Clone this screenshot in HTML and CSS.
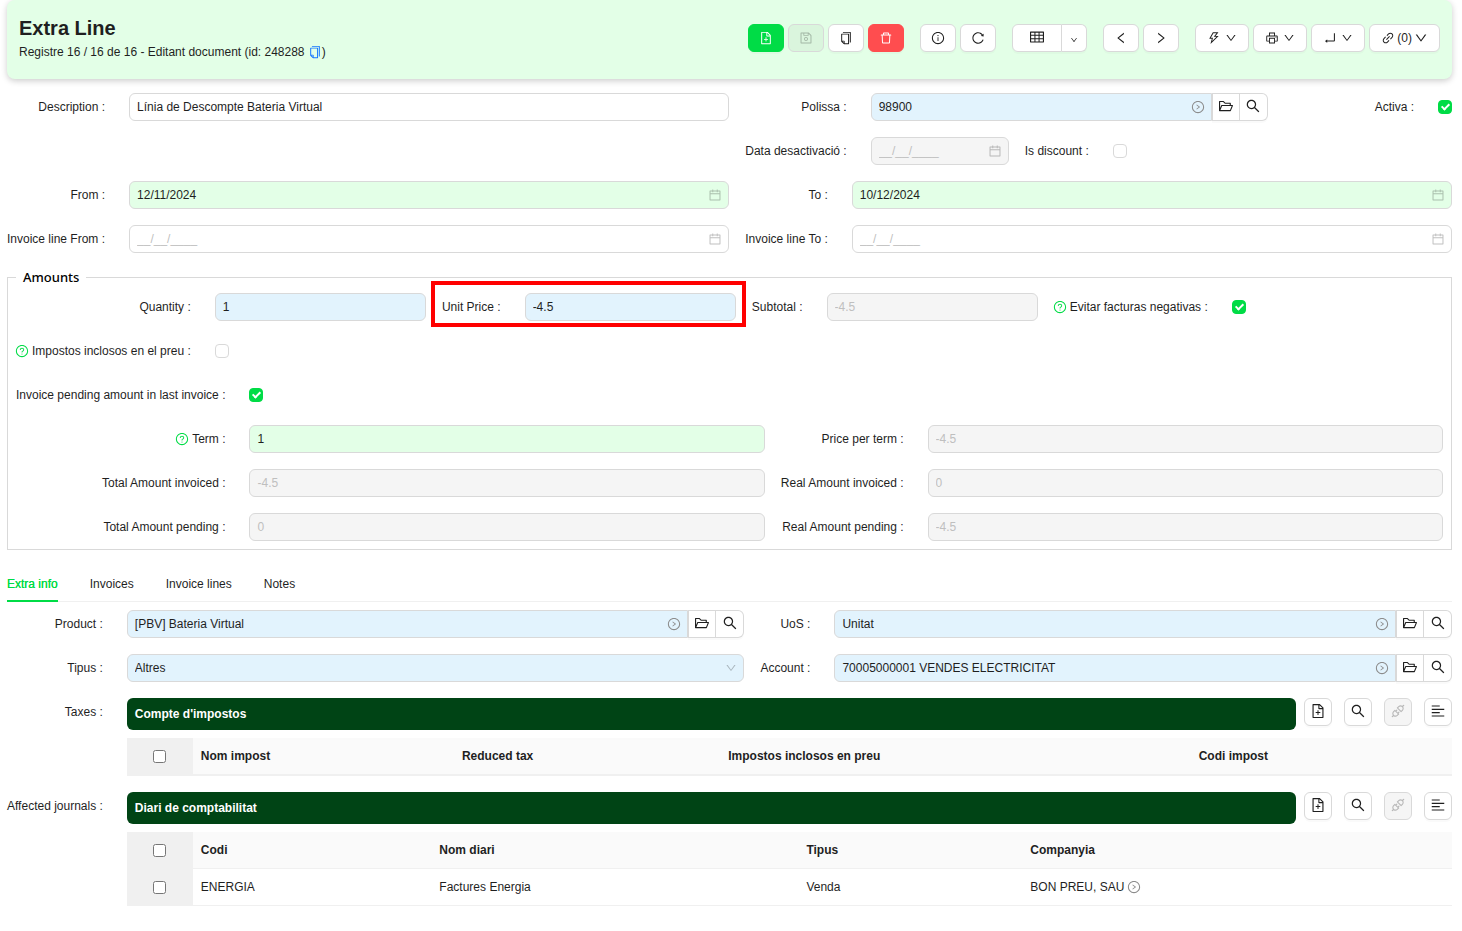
FILE: index.html
```html
<!DOCTYPE html>
<html lang="ca">
<head>
<meta charset="utf-8">
<meta name="viewport" content="width=device-width, initial-scale=1">
<title>Extra Line</title>
<link rel="stylesheet" href="styles.css">
</head>
<body>
<svg class="sprite" aria-hidden="true">
  <symbol id="file-add" viewBox="0 0 1024 1024"><path d="M854.6 288.6L639.4 73.4c-6-6-14.1-9.4-22.6-9.4H192c-17.7 0-32 14.3-32 32v832c0 17.7 14.3 32 32 32h640c17.7 0 32-14.3 32-32V311.3c0-8.5-3.4-16.7-9.4-22.7zM790.2 326H602V137.8L790.2 326zm1.8 562H232V136h302v216a42 42 0 0042 42h216v494zM544 472c0-4.4-3.6-8-8-8h-48c-4.4 0-8 3.6-8 8v108H372c-4.4 0-8 3.6-8 8v48c0 4.4 3.6 8 8 8h108v108c0 4.4 3.6 8 8 8h48c4.4 0 8-3.6 8-8V644h108c4.4 0 8-3.6 8-8v-48c0-4.4-3.6-8-8-8H544V472z"/></symbol>
  <symbol id="save" viewBox="0 0 1024 1024"><path d="M893.3 293.3L730.7 130.7c-7.5-7.5-16.7-13-26.7-16V112H144c-17.7 0-32 14.3-32 32v736c0 17.7 14.3 32 32 32h736c17.7 0 32-14.3 32-32V338.5c0-17-6.7-33.2-18.7-45.2zM384 184h256v104H384V184zm456 656H184V184h136v136c0 17.7 14.3 32 32 32h320c17.7 0 32-14.3 32-32V205.8l136 136V840zM512 442c-79.5 0-144 64.5-144 144s64.5 144 144 144 144-64.5 144-144-64.5-144-144-144zm0 224c-44.2 0-80-35.8-80-80s35.8-80 80-80 80 35.8 80 80-35.8 80-80 80z"/></symbol>
  <symbol id="copy" viewBox="0 0 1024 1024"><path d="M832 64H296c-4.4 0-8 3.6-8 8v56c0 4.4 3.6 8 8 8h496v688c0 4.4 3.6 8 8 8h56c4.4 0 8-3.6 8-8V96c0-17.7-14.3-32-32-32zM704 192H192c-17.7 0-32 14.3-32 32v530.7c0 8.5 3.4 16.6 9.4 22.6l173.3 173.3c2.2 2.2 4.7 4 7.4 5.5v1.9h4.2c3.5 1.3 7.2 2 11 2H704c17.7 0 32-14.3 32-32V224c0-17.7-14.3-32-32-32zM350 856.2L263.9 770H350v86.2zM664 888H414V746c0-22.1-17.9-40-40-40H232V264h432v624z"/></symbol>
  <symbol id="delete" viewBox="0 0 1024 1024"><path d="M360 184h-8c4.4 0 8-3.6 8-8v8h304v-8c0 4.4 3.6 8 8 8h-8v72h72v-80c0-35.3-28.7-64-64-64H352c-35.3 0-64 28.7-64 64v80h72v-72zm504 72H160c-17.7 0-32 14.3-32 32v32c0 4.4 3.6 8 8 8h60.4l24.7 523c1.6 34.1 29.8 61 63.9 61h454c34.2 0 62.3-26.8 63.9-61l24.7-523H888c4.4 0 8-3.6 8-8v-32c0-17.7-14.3-32-32-32zM731.3 840H292.7l-24.2-512h487l-24.2 512z"/></symbol>
  <symbol id="info" viewBox="0 0 1024 1024"><path d="M512 64C264.6 64 64 264.6 64 512s200.6 448 448 448 448-200.6 448-448S759.4 64 512 64zm0 820c-205.4 0-372-166.6-372-372s166.6-372 372-372 372 166.6 372 372-166.6 372-372 372z"/><path d="M464 336a48 48 0 1096 0 48 48 0 10-96 0zm72 112h-48c-4.4 0-8 3.6-8 8v272c0 4.4 3.6 8 8 8h48c4.4 0 8-3.6 8-8V456c0-4.4-3.6-8-8-8z"/></symbol>
  <symbol id="reload" viewBox="0 0 1024 1024"><path d="M909.1 209.3l-56.4 44.1C775.8 155.1 656.2 92 521.9 92 290 92 102.3 279.5 102 511.5 101.7 743.7 289.8 932 521.9 932c181.3 0 335.8-115 394.6-276.1 1.5-4.2-.7-8.9-4.9-10.3l-56.7-19.5a8 8 0 00-10.1 4.8c-1.8 5-3.8 10-5.9 14.9-17.3 41-42.1 77.8-73.7 109.4A344.77 344.77 0 01655.9 829c-42.3 17.9-87.4 27-133.8 27-46.5 0-91.5-9.1-133.8-27A341.5 341.5 0 01279 755.2a342.16 342.16 0 01-73.7-109.4c-17.9-42.4-27-87.4-27-133.9s9.1-91.5 27-133.9c17.3-41 42.1-77.8 73.7-109.4 31.6-31.6 68.4-56.4 109.3-73.8 42.3-17.9 87.4-27 133.8-27 46.5 0 91.5 9.1 133.8 27a341.5 341.5 0 01109.3 73.8c9.9 9.9 19.2 20.4 27.8 31.4l-60.2 47a8 8 0 003 14.1l175.6 43c5 1.2 9.9-2.6 9.9-7.7l.8-180.9c-.1-6.6-7.8-10.3-13-6.2z"/></symbol>
  <symbol id="table" viewBox="0 0 1024 1024"><path d="M928 160H96c-17.7 0-32 14.3-32 32v640c0 17.7 14.3 32 32 32h832c17.7 0 32-14.3 32-32V192c0-17.7-14.3-32-32-32zm-40 208H676V232h212v136zm0 224H676V432h212v160zM412 432h200v160H412V432zm200-64H412V232h200v136zm-476 64h212v160H136V432zm0-200h212v136H136V232zm0 424h212v136H136V656zm276 0h200v136H412V656zm476 136H676V656h212v136z"/></symbol>
  <symbol id="down" viewBox="0 0 1024 1024"><path d="M884 256h-75c-5.1 0-9.9 2.5-12.9 6.6L512 654.2 227.9 262.6c-3-4.1-7.8-6.6-12.9-6.6h-75c-6.5 0-10.3 7.4-6.5 12.7l352.6 486.1c12.8 17.6 39 17.6 51.7 0l352.6-486.1c3.9-5.3.1-12.7-6.4-12.7z"/></symbol>
  <symbol id="left" viewBox="0 0 1024 1024"><path d="M724 218.3V141c0-6.7-7.7-10.4-12.9-6.3L260.3 486.8a31.86 31.86 0 000 50.3l450.8 352.1c5.3 4.1 12.9.4 12.9-6.3v-77.3c0-4.9-2.3-9.6-6.1-12.6l-360-281 360-281.1c3.8-3 6.1-7.7 6.1-12.6z"/></symbol>
  <symbol id="right" viewBox="0 0 1024 1024"><path d="M765.7 486.8L314.9 134.7A7.97 7.97 0 00302 141v77.3c0 4.9 2.3 9.6 6.1 12.6l360 281.1-360 281.1c-3.9 3-6.1 7.7-6.1 12.6V883c0 6.7 7.7 10.4 12.9 6.3l450.8-352.1a31.96 31.96 0 000-50.4z"/></symbol>
  <symbol id="bolt" viewBox="0 0 1024 1024"><path d="M848 359.3H627.7L825.8 109c4.1-5.3.4-13-6.3-13H436c-2.8 0-5.5 1.5-6.9 4L170 547.5c-3.1 5.3.7 12 6.9 12h174.4l-89.4 357.6c-1.9 7.8 7.5 13.3 13.3 7.7L853.5 373c5.2-4.9 1.7-13.7-5.5-13.7zM378.2 732.5l60.3-241H281.1l189.6-327.4h224.6L487 427.4h211L378.2 732.5z"/></symbol>
  <symbol id="printer" viewBox="0 0 1024 1024"><path d="M820 436h-40c-4.4 0-8 3.6-8 8v40c0 4.4 3.6 8 8 8h40c4.4 0 8-3.6 8-8v-40c0-4.4-3.6-8-8-8zm32-104H732V120c0-4.4-3.6-8-8-8H300c-4.4 0-8 3.6-8 8v212H172c-44.2 0-80 35.8-80 80v328c0 17.7 14.3 32 32 32h168v132c0 4.4 3.6 8 8 8h424c4.4 0 8-3.6 8-8V772h168c17.7 0 32-14.3 32-32V412c0-44.2-35.8-80-80-80zM360 180h304v152H360V180zm304 664H360V568h304v276zm200-140H732V500H292v204H160V412c0-6.6 5.4-12 12-12h680c6.6 0 12 5.4 12 12v292z"/></symbol>
  <symbol id="enter" viewBox="0 0 1024 1024"><path d="M864 170h-60c-4.4 0-8 3.6-8 8v518H310v-73c0-6.7-7.8-10.5-13-6.3l-141.9 112a8 8 0 000 12.6l141.9 112c5.3 4.2 13 .4 13-6.3v-75h498c35.3 0 64-28.7 64-64V178c0-4.4-3.6-8-8-8z"/></symbol>
  <symbol id="link" viewBox="0 0 1024 1024"><path d="M574 665.4a8.03 8.03 0 00-11.3 0L446.5 781.6c-53.8 53.8-144.6 59.5-204 0-59.5-59.5-53.8-150.2 0-204l116.2-116.2c3.1-3.1 3.1-8.2 0-11.3l-39.8-39.8a8.03 8.03 0 00-11.3 0L191.4 526.5c-84.6 84.6-84.6 221.5 0 306s221.5 84.6 306 0l116.2-116.2c3.1-3.1 3.1-8.2 0-11.3L574 665.4zm258.6-474c-84.6-84.6-221.5-84.6-306 0L410.3 307.6a8.03 8.03 0 000 11.3l39.7 39.7c3.1 3.1 8.2 3.1 11.3 0l116.2-116.2c53.8-53.8 144.6-59.5 204 0 59.5 59.5 53.8 150.2 0 204L665.3 562.6a8.03 8.03 0 000 11.3l39.8 39.8c3.1 3.1 8.2 3.1 11.3 0l116.2-116.2c84.5-84.6 84.5-221.5 0-306.1zM610.1 372.3a8.03 8.03 0 00-11.3 0L372.3 598.7a8.03 8.03 0 000 11.3l39.6 39.6c3.1 3.1 8.2 3.1 11.3 0l226.4-226.4c3.1-3.1 3.1-8.2 0-11.3l-39.5-39.6z"/></symbol>
  <symbol id="folder" viewBox="0 0 1024 1024"><path d="M928 444H820V330.4c0-17.7-14.3-32-32-32H473L355.7 186.2a8.15 8.15 0 00-5.5-2.2H96c-17.7 0-32 14.3-32 32v592c0 17.7 14.3 32 32 32h698c13 0 24.8-7.9 29.7-20l134-332c1.5-3.8 2.3-7.9 2.3-12 0-17.7-14.3-32-32-32zM136 256h188.5l119.6 114.4H748V444H238c-13 0-24.8 7.9-29.7 20L136 643.2V256zm635.3 512H159l103.3-256h612.4L771.3 768z"/></symbol>
  <symbol id="search" viewBox="0 0 1024 1024"><path d="M909.6 854.5L649.9 594.8C690.2 542.7 712 479 712 412c0-80.2-31.3-155.4-87.9-212.1-56.6-56.7-132-87.9-212.1-87.9s-155.5 31.3-212.1 87.9C143.2 256.5 112 331.8 112 412c0 80.1 31.3 155.5 87.9 212.1C256.5 680.8 331.8 712 412 712c67 0 130.6-21.8 182.7-62l259.7 259.6a8.2 8.2 0 0011.6 0l43.6-43.5a8.2 8.2 0 000-11.6zM570.4 570.4C528 612.7 471.8 636 412 636s-116-23.3-158.4-65.6C211.3 528 188 471.8 188 412s23.3-116.1 65.6-158.4C296 211.3 352.2 188 412 188s116.1 23.2 158.4 65.6S636 352.2 636 412s-23.3 116.1-65.6 158.4z"/></symbol>
  <symbol id="calendar" viewBox="0 0 1024 1024"><path d="M880 184H712v-64c0-4.4-3.6-8-8-8h-56c-4.4 0-8 3.6-8 8v64H384v-64c0-4.4-3.6-8-8-8h-56c-4.4 0-8 3.6-8 8v64H144c-17.7 0-32 14.3-32 32v664c0 17.7 14.3 32 32 32h736c17.7 0 32-14.3 32-32V216c0-17.7-14.3-32-32-32zm-40 656H184V460h656v380zM184 392V256h128v48c0 4.4 3.6 8 8 8h56c4.4 0 8-3.6 8-8v-48h256v48c0 4.4 3.6 8 8 8h56c4.4 0 8-3.6 8-8v-48h128v136H184z"/></symbol>
  <symbol id="go" viewBox="0 0 1024 1024"><path d="M666.7 505.5l-246-178A8 8 0 00408 334v46.9c0 10.2 4.9 19.9 13.2 25.9L566.6 512 421.2 617.2c-8.3 6-13.2 15.6-13.2 25.9V690c0 6.5 7.4 10.3 12.7 6.5l246-178c4.4-3.2 4.4-9.8 0-13z"/><path d="M512 64C264.6 64 64 264.6 64 512s200.6 448 448 448 448-200.6 448-448S759.4 64 512 64zm0 820c-205.4 0-372-166.6-372-372s166.6-372 372-372 372 166.6 372 372-166.6 372-372 372z"/></symbol>
  <symbol id="help" viewBox="0 0 1024 1024"><path d="M512 64C264.6 64 64 264.6 64 512s200.6 448 448 448 448-200.6 448-448S759.4 64 512 64zm0 820c-205.4 0-372-166.6-372-372s166.6-372 372-372 372 166.6 372 372-166.6 372-372 372z"/><path d="M623.6 316.7C593.6 290.4 554 276 512 276s-81.6 14.5-111.6 40.7C369.2 344 352 380.7 352 420v7.6c0 4.4 3.6 8 8 8h48c4.4 0 8-3.6 8-8V420c0-44.1 43.1-80 96-80s96 35.9 96 80c0 31.1-22 59.6-56.1 72.7-21.2 8.1-39.2 22.3-52.1 40.9-13.1 19-19.9 41.8-19.9 64.9V620c0 4.4 3.6 8 8 8h48c4.4 0 8-3.6 8-8v-22.7a48.3 48.3 0 0130.9-44.8c59-22.7 97.1-74.7 97.1-132.5.1-39.3-17.1-76-48.3-103.3zM472 732a40 40 0 1080 0 40 40 0 10-80 0z"/></symbol>
  <symbol id="lines" viewBox="0 0 1024 1024"><path d="M112 158h512v72H112zM112 370h800v72H112zM112 582h512v72H112zM112 794h800v72H112z"/></symbol>
  <symbol id="plug" viewBox="0 0 1024 1024"><path d="M917.7 148.8l-42.4-42.4c-1.6-1.6-3.6-2.3-5.7-2.3s-4.1.8-5.7 2.3l-76.1 76.1a199.27 199.27 0 00-112.1-34.3c-51.2 0-102.4 19.5-141.5 58.6L432.3 308.7a8.03 8.03 0 000 11.3L704 591.7c1.6 1.6 3.6 2.3 5.7 2.3 2 0 4.1-.8 5.7-2.3l101.9-101.9c68.9-69 77-175.7 24.3-253.5l76.1-76.1c3.1-3.2 3.1-8.3 0-11.4zM769.1 441.7l-59.4 59.4-186.8-186.8 59.4-59.4c24.9-24.9 58.1-38.7 93.4-38.7 35.3 0 68.4 13.7 93.4 38.7 24.9 24.9 38.7 58.1 38.7 93.4 0 35.3-13.8 68.4-38.7 93.4zm-190.2 105a8.03 8.03 0 00-11.3 0L501 613.3 410.7 523l66.7-66.7c3.1-3.1 3.1-8.2 0-11.3L441 408.6a8.03 8.03 0 00-11.3 0L363 475.3l-43-43a7.85 7.85 0 00-5.7-2.3c-2 0-4.1.8-5.7 2.3L206.8 534.2c-68.9 69-77 175.7-24.3 253.5l-76.1 76.1a8.03 8.03 0 000 11.3l42.4 42.4c1.6 1.6 3.6 2.3 5.7 2.3s4.1-.8 5.7-2.3l76.1-76.1c33.7 22.9 72.9 34.3 112.1 34.3 51.2 0 102.4-19.5 141.5-58.6l101.9-101.9c3.1-3.1 3.1-8.2 0-11.3l-43-43 66.7-66.7c3.1-3.1 3.1-8.2 0-11.3l-36.6-36.2zM441.7 769.1a131.32 131.32 0 01-93.4 38.7c-35.3 0-68.4-13.7-93.4-38.7a131.32 131.32 0 01-38.7-93.4c0-35.3 13.7-68.4 38.7-93.4l59.4-59.4 186.8 186.8-59.4 59.4z"/></symbol>
</svg>

<header class="header">
  <div class="heading">
    <h1 class="title">Extra Line</h1>
    <p class="subtitle">Registre 16 / 16 de 16 - Editant document (id: 248288 <a class="copy-link" href="#" aria-label="Copia l'id"><svg class="icon"><use href="#copy"/></svg></a>)</p>
  </div>
  <div class="toolbar">
    <div class="group">
      <button class="btn new" aria-label="Nou"><svg class="icon"><use href="#file-add"/></svg></button>
      <button class="btn" disabled aria-label="Desa"><svg class="icon"><use href="#save"/></svg></button>
      <button class="btn" aria-label="Duplica"><svg class="icon"><use href="#copy"/></svg></button>
      <button class="btn danger" aria-label="Elimina"><svg class="icon"><use href="#delete"/></svg></button>
    </div>
    <div class="group">
      <button class="btn" aria-label="Informació"><svg class="icon"><use href="#info"/></svg></button>
      <button class="btn" aria-label="Recarrega"><svg class="icon"><use href="#reload"/></svg></button>
    </div>
    <div class="group split">
      <button class="btn view" aria-label="Vista de taula"><svg class="icon large"><use href="#table"/></svg></button>
      <button class="btn view-more" aria-label="Més vistes"><svg class="icon small"><use href="#down"/></svg></button>
    </div>
    <div class="group">
      <button class="btn" aria-label="Anterior"><svg class="icon"><use href="#left"/></svg></button>
      <button class="btn" aria-label="Següent"><svg class="icon"><use href="#right"/></svg></button>
    </div>
    <div class="group">
      <button class="btn menu" aria-label="Accions"><svg class="icon"><use href="#bolt"/></svg><svg class="icon caret"><use href="#down"/></svg></button>
      <button class="btn menu" aria-label="Imprimeix"><svg class="icon"><use href="#printer"/></svg><svg class="icon caret"><use href="#down"/></svg></button>
      <button class="btn menu" aria-label="Relacions"><svg class="icon"><use href="#enter"/></svg><svg class="icon caret"><use href="#down"/></svg></button>
      <button class="btn menu tight" aria-label="Adjunts (0)"><svg class="icon"><use href="#link"/></svg><span>(0)</span><svg class="icon"><use href="#down"/></svg></button>
    </div>
  </div>
</header>

<main>
  <div class="form">
    <label class="label tall" for="description">Description :</label>
    <div class="field tall"><input id="description" type="text" value="Línia de Descompte Bateria Virtual"></div>
    <div class="form policy">
      <label class="label" for="polissa">Polissa :</label>
      <div class="combo wide">
        <div class="field required"><input id="polissa" type="text" value="98900"><svg class="icon go"><use href="#go"/></svg></div>
        <button class="btn square" aria-label="Obre"><svg class="icon large"><use href="#folder"/></svg></button>
        <button class="btn square" aria-label="Cerca"><svg class="icon large"><use href="#search"/></svg></button>
      </div>
      <label class="label" for="activa">Activa :</label>
      <input class="check" id="activa" type="checkbox" checked>
      <label class="label" for="deactivation">Data desactivació :</label>
      <div class="field disabled"><input id="deactivation" type="text" placeholder="__/__/____" disabled><svg class="icon calendar"><use href="#calendar"/></svg></div>
      <label class="label" for="is-discount">Is discount :</label>
      <input class="check" id="is-discount" type="checkbox">
    </div>
    <label class="label" for="from">From :</label>
    <div class="field key"><input id="from" type="text" value="12/11/2024"><svg class="icon calendar"><use href="#calendar"/></svg></div>
    <label class="label" for="to">To :</label>
    <div class="field key"><input id="to" type="text" value="10/12/2024"><svg class="icon calendar"><use href="#calendar"/></svg></div>
    <label class="label" for="line-from">Invoice line From :</label>
    <div class="field"><input id="line-from" type="text" placeholder="__/__/____"><svg class="icon calendar"><use href="#calendar"/></svg></div>
    <label class="label" for="line-to">Invoice line To :</label>
    <div class="field"><input id="line-to" type="text" placeholder="__/__/____"><svg class="icon calendar"><use href="#calendar"/></svg></div>
  </div>

  <fieldset class="amounts">
    <legend>Amounts</legend>
    <div class="form four">
      <label class="label" for="quantity">Quantity :</label>
      <div class="field required"><input id="quantity" type="text" value="1"></div>
      <div class="pair highlight">
        <label class="label" for="unit-price">Unit Price :</label>
        <div class="field required"><input id="unit-price" type="text" value="-4.5"></div>
      </div>
      <label class="label" for="subtotal">Subtotal :</label>
      <div class="field disabled"><input id="subtotal" type="text" value="-4.5" disabled></div>
      <label class="label" for="avoid-negative"><svg class="icon"><use href="#help"/></svg>Evitar facturas negativas :</label>
      <input class="check" id="avoid-negative" type="checkbox" checked>
      <label class="label" for="taxes-included"><svg class="icon"><use href="#help"/></svg>Impostos inclosos en el preu :</label>
      <input class="check" id="taxes-included" type="checkbox">
    </div>
    <div class="form terms">
      <label class="label" for="pending-last">Invoice pending amount in last invoice :</label>
      <input class="check row-end" id="pending-last" type="checkbox" checked>
      <label class="label" for="term"><svg class="icon"><use href="#help"/></svg>Term :</label>
      <div class="field key"><input id="term" type="text" value="1"></div>
      <label class="label" for="price-term">Price per term :</label>
      <div class="field disabled"><input id="price-term" type="text" value="-4.5" disabled></div>
      <label class="label" for="total-invoiced">Total Amount invoiced :</label>
      <div class="field disabled"><input id="total-invoiced" type="text" value="-4.5" disabled></div>
      <label class="label" for="real-invoiced">Real Amount invoiced :</label>
      <div class="field disabled"><input id="real-invoiced" type="text" value="0" disabled></div>
      <label class="label" for="total-pending">Total Amount pending :</label>
      <div class="field disabled"><input id="total-pending" type="text" value="0" disabled></div>
      <label class="label" for="real-pending">Real Amount pending :</label>
      <div class="field disabled"><input id="real-pending" type="text" value="-4.5" disabled></div>
    </div>
  </fieldset>

  <div class="tabs" role="tablist">
    <button class="tab active" role="tab" aria-selected="true">Extra info</button>
    <button class="tab" role="tab" aria-selected="false">Invoices</button>
    <button class="tab" role="tab" aria-selected="false">Invoice lines</button>
    <button class="tab" role="tab" aria-selected="false">Notes</button>
  </div>

  <div class="form">
    <label class="label" for="product">Product :</label>
    <div class="combo">
      <div class="field required"><input id="product" type="text" value="[PBV] Bateria Virtual"><svg class="icon go"><use href="#go"/></svg></div>
      <button class="btn square" aria-label="Obre"><svg class="icon large"><use href="#folder"/></svg></button>
      <button class="btn square" aria-label="Cerca"><svg class="icon large"><use href="#search"/></svg></button>
    </div>
    <label class="label" for="uos">UoS :</label>
    <div class="combo">
      <div class="field required"><input id="uos" type="text" value="Unitat"><svg class="icon go"><use href="#go"/></svg></div>
      <button class="btn square" aria-label="Obre"><svg class="icon large"><use href="#folder"/></svg></button>
      <button class="btn square" aria-label="Cerca"><svg class="icon large"><use href="#search"/></svg></button>
    </div>
    <label class="label" for="tipus">Tipus :</label>
    <div class="field required select"><select id="tipus"><option>Altres</option></select><svg class="icon arrow"><use href="#down"/></svg></div>
    <label class="label" for="account">Account :</label>
    <div class="combo">
      <div class="field required"><input id="account" type="text" value="70005000001 VENDES ELECTRICITAT"><svg class="icon go"><use href="#go"/></svg></div>
      <button class="btn square" aria-label="Obre"><svg class="icon large"><use href="#folder"/></svg></button>
      <button class="btn square" aria-label="Cerca"><svg class="icon large"><use href="#search"/></svg></button>
    </div>

    <span class="label list-label">Taxes :</span>
    <section class="list">
      <div class="list-head">
        <h2 class="list-title">Compte d'impostos</h2>
        <div class="list-actions">
          <button class="btn square" aria-label="Afegeix"><svg class="icon large"><use href="#file-add"/></svg></button>
          <button class="btn square" aria-label="Cerca"><svg class="icon large"><use href="#search"/></svg></button>
          <button class="btn square" disabled aria-label="Desvincula"><svg class="icon large"><use href="#plug"/></svg></button>
          <button class="btn square" aria-label="Canvia la vista"><svg class="icon large"><use href="#lines"/></svg></button>
        </div>
      </div>
      <table class="grid taxes">
        <thead><tr><th class="pick"><input type="checkbox" aria-label="Selecciona-ho tot"></th><th class="c1">Nom impost</th><th class="c2">Reduced tax</th><th class="c3">Impostos inclosos en preu</th><th>Codi impost</th></tr></thead>
      </table>
    </section>

    <span class="label list-label">Affected journals :</span>
    <section class="list">
      <div class="list-head">
        <h2 class="list-title">Diari de comptabilitat</h2>
        <div class="list-actions">
          <button class="btn square" aria-label="Afegeix"><svg class="icon large"><use href="#file-add"/></svg></button>
          <button class="btn square" aria-label="Cerca"><svg class="icon large"><use href="#search"/></svg></button>
          <button class="btn square" disabled aria-label="Desvincula"><svg class="icon large"><use href="#plug"/></svg></button>
          <button class="btn square" aria-label="Canvia la vista"><svg class="icon large"><use href="#lines"/></svg></button>
        </div>
      </div>
      <table class="grid journals">
        <thead><tr><th class="pick"><input type="checkbox" aria-label="Selecciona-ho tot"></th><th class="c1">Codi</th><th class="c2">Nom diari</th><th class="c3">Tipus</th><th>Companyia</th></tr></thead>
        <tbody><tr><td class="pick"><input type="checkbox" aria-label="Selecciona ENERGIA"></td><td>ENERGIA</td><td>Factures Energia</td><td>Venda</td><td><span class="with-icon">BON PREU, SAU<svg class="icon go"><use href="#go"/></svg></span></td></tr></tbody>
      </table>
    </section>
  </div>
</main>
</body>
</html>
```
FILE: styles.css
```css
:root {
  --text: #1f1f1f;
  --line: #d9d9d9;
  --green: #00dc46;
  --mint: #e3ffe7;
  --sky: #e2f3fd;
  --muted: #f5f5f5;
  --faint: #bfbfbf;
}

*, ::before, ::after { box-sizing: border-box; }

body {
  margin: 0;
  padding: 0 10px 16px 7px;
  background: #fff;
  color: var(--text);
  font: 12px/20px "Liberation Sans", Arial, sans-serif;
}

input, select, button { font: inherit; color: inherit; }

.sprite { display: none; }

.icon {
  flex: none;
  width: 14px;
  height: 14px;
  fill: currentColor;
}
.icon.large { width: 16px; height: 16px; margin-bottom: 2px; }
.icon.caret { width: 12px; height: 12px; }
.icon.small { width: 8px; height: 8px; }
.icon.go { color: #8c8c8c; }

/* Header */
.header {
  display: flex;
  justify-content: space-between;
  align-items: center;
  margin-bottom: 14px;
  padding: 14px 12px 17px;
  background: var(--mint);
  border-radius: 8px;
  box-shadow: 0 2px 6px rgba(0, 0, 0, 0.2);
}
.title { margin: 0; font-size: 20px; line-height: 28px; }
.subtitle { margin: 0; }
.copy-link { color: #1677ff; }
.copy-link .icon { vertical-align: -3px; }

.toolbar { display: flex; gap: 16px; }
.group { display: flex; gap: 4px; }

.btn {
  display: flex;
  flex: none;
  align-items: center;
  justify-content: center;
  width: 36px;
  height: 28px;
  padding: 0;
  border: 1px solid var(--line);
  border-radius: 6px;
  background: #fff;
  box-shadow: 0 2px 0 rgba(0, 0, 0, 0.02);
}
.btn:disabled { background: rgba(0, 0, 0, 0.04); color: rgba(0, 0, 0, 0.25); box-shadow: none; }
.btn.new { background: var(--green); border-color: var(--green); color: #fff; }
.btn.danger { background: #ff4d4f; border-color: #ff4d4f; color: #fff; }
.btn.menu { width: auto; padding: 0 11px; gap: 4px; }
.btn.menu.tight { gap: 2px; }
.btn.square { width: 28px; }
.group.split { gap: 0; }
.btn.view { width: 50px; border-radius: 6px 0 0 6px; }
.btn.view-more { width: 25px; border-left: 0; border-radius: 0 6px 6px 0; }
.btn.view-more .icon { margin-top: 4px; }

/* Form layout */
.form {
  display: grid;
  grid-template-columns: max-content minmax(0, 1fr) max-content minmax(0, 1fr);
  grid-auto-rows: minmax(28px, auto);
  gap: 16px;
  align-items: center;
}
.policy {
  grid-column: span 2;
  grid-row: span 2;
  grid-template-columns: max-content minmax(0, 138fr) max-content minmax(0, 155fr) minmax(0, 138fr) 14px;
}
.wide { grid-column: span 3; }
.tall { grid-row: span 2; align-self: start; min-height: 28px; }
.four { grid-template-columns: repeat(4, max-content minmax(0, 1fr)); }
.pair { display: grid; grid-column: span 2; grid-template-columns: subgrid; align-items: center; }
.row-end { grid-column: 2 / -1; }
.terms { margin-top: 16px; }

.label {
  display: flex;
  align-items: center;
  justify-content: flex-end;
  gap: 3px;
  padding-right: 8px;
  white-space: nowrap;
}
.label .icon { margin-left: -1px; color: var(--green); }

.field {
  display: flex;
  flex: 1;
  align-items: center;
  min-width: 0;
  height: 28px;
  padding: 0 6px 0 7px;
  border: 1px solid var(--line);
  border-radius: 6px;
  background: #fff;
}
.field input, .field select {
  flex: 1;
  width: 100%;
  min-width: 0;
  padding: 0;
  border: 0;
  outline: 0;
  background: transparent;
  appearance: none;
}
.field input::placeholder { color: var(--faint); }
.field.required { background: var(--sky); }
.field.key { background: var(--mint); }
.field.disabled { background: var(--muted); color: var(--faint); }
.icon.calendar, .icon.arrow { color: rgba(0, 0, 0, 0.25); }
.icon.arrow { width: 12px; height: 12px; }

.combo { display: flex; }
.combo .field { border-radius: 6px 0 0 6px; }
.combo .btn { border-radius: 0; }
.combo .btn:last-child { border-left: 0; border-radius: 0 6px 6px 0; }

.check {
  position: relative;
  width: 14px;
  height: 14px;
  margin: 0;
  border: 1px solid var(--line);
  border-radius: 4px;
  background: #fff;
  appearance: none;
}
.check:checked { background: var(--green); border-color: var(--green); }
.check:checked::after {
  content: "";
  position: absolute;
  left: 4px;
  top: 1px;
  width: 5px;
  height: 8px;
  border: solid #fff;
  border-width: 0 2px 2px 0;
  transform: rotate(45deg);
}

/* Amounts */
.amounts {
  min-width: 0;
  margin: 15px 0 0;
  padding: 7px 8px 8px;
  border: 1px solid var(--line);
}
.amounts legend {
  padding: 0 7px;
  color: #000;
  font: 500 13px/18px "Noto Sans", "Open Sans", sans-serif;
}
.highlight { position: relative; }
.highlight::after {
  content: "";
  position: absolute;
  inset: -12px -10px -6px -11px;
  border: 4px solid #f00;
  pointer-events: none;
}

/* Tabs */
.tabs {
  display: flex;
  gap: 32px;
  margin: 16px 0 8px;
  box-shadow: inset 0 -1px #f0f0f0;
}
.tab {
  padding: 8px 0 6px;
  border: 0;
  border-bottom: 2px solid transparent;
  background: none;
}
.tab.active { color: var(--green); border-color: var(--green); text-shadow: 0 0 0 currentColor; }

/* Embedded lists */
.list-label { align-self: start; height: 28px; }
.list { grid-column: 2 / -1; }
.list-head { display: flex; gap: 8px; margin-bottom: 8px; }
.list-title {
  flex: 1;
  margin: 0;
  padding: 0 8px;
  border-radius: 6px;
  background: #004415;
  color: #fff;
  font-size: 12px;
  line-height: 32px;
}
.list-actions { display: flex; gap: 12px; }

.grid { width: 100%; border-spacing: 0; table-layout: fixed; }
.grid th, .grid td {
  height: 37px;
  padding: 0 8px;
  border-bottom: 1px solid #f0f0f0;
  text-align: left;
}
.grid th { background: #fafafa; }
.grid .pick { width: 66px; background: #f0f0f0; text-align: center; }
.pick input { margin: 0; vertical-align: -3px; }
.taxes { border-bottom: 1px solid #f0f0f0; }
.taxes .c1 { width: 19.7%; }
.taxes .c2 { width: 20.1%; }
.taxes .c3 { width: 35.5%; }
.journals .c1 { width: 18%; }
.journals .c2 { width: 27.7%; }
.journals .c3 { width: 16.9%; }
.with-icon { display: inline-flex; align-items: center; gap: 3px; }
```
